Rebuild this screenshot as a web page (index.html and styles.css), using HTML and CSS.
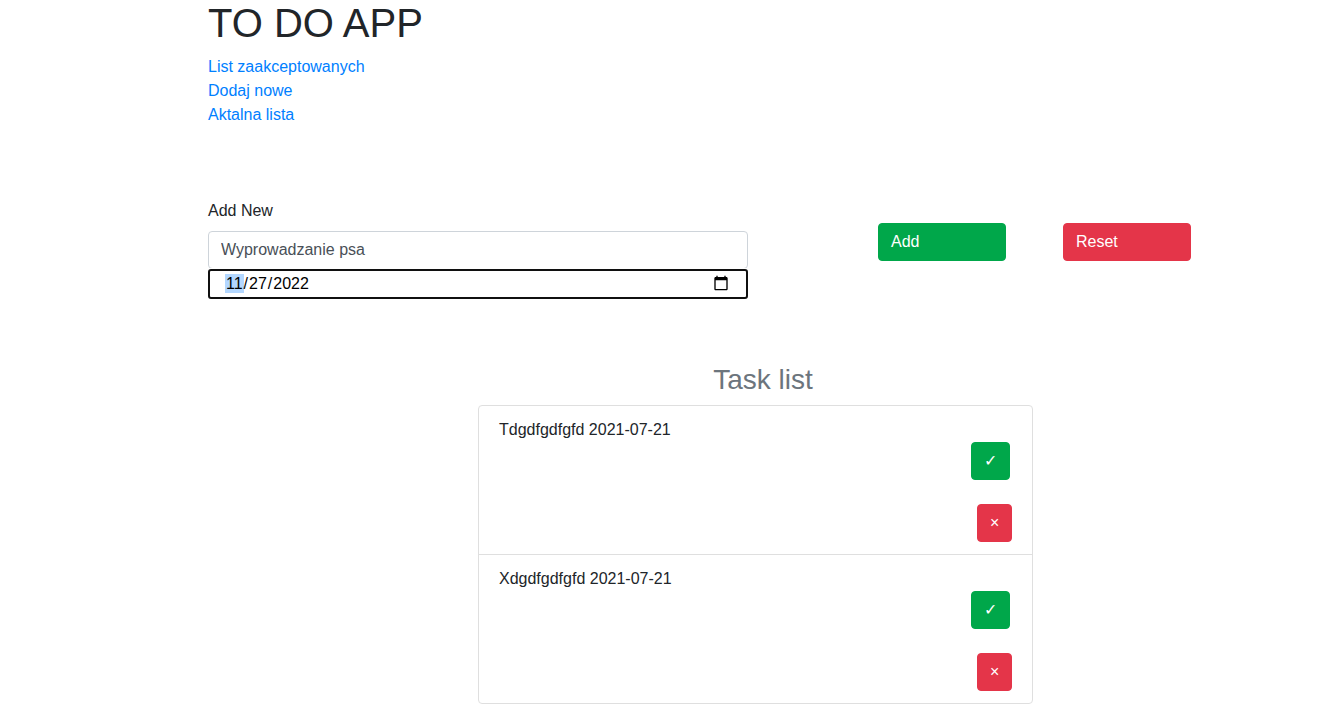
FILE: index.html
```html
<!DOCTYPE html>
<html lang="pl">
<head>
<meta charset="utf-8">
<title>TO DO APP</title>
<link rel="stylesheet" href="styles.css">
</head>
<body>
<div class="page">
  <h1 class="title">TO DO APP</h1>
  <nav class="nav">
    <a href="#">List zaakceptowanych</a>
    <a href="#">Dodaj nowe</a>
    <a href="#">Aktalna lista</a>
  </nav>
  <form class="form">
    <div class="fields">
      <label class="label" for="task">Add New</label>
      <input class="control" id="task" type="text" value="Wyprowadzanie psa">
      <div class="date">
        <span class="date-value"><span class="part selected">11</span>/<span class="part">27</span>/<span class="part">2022</span></span>
        <svg class="calendar" width="16" height="16" viewBox="0 0 24 24"><path d="M20 3h-1V1h-2v2H7V1H5v2H4c-1.100 0-2 .9-2 2v16c0 1.100.9 2 2 2h16c1.100 0 2-.9 2-2V5c0-1.100-.9-2-2-2zm0 18H4V8h16v13z"/></svg>
      </div>
    </div>
    <button class="btn green wide" type="button">Add</button>
    <button class="btn red wide" type="button">Reset</button>
  </form>
  <section class="tasks">
    <h3 class="heading">Task list</h3>
    <ul class="list">
      <li class="item">
        <span>Tdgdfgdfgfd 2021-07-21</span>
        <button class="btn green accept" type="button">✓</button>
        <button class="btn red remove" type="button">×</button>
      </li>
      <li class="item">
        <span>Xdgdfgdfgfd 2021-07-21</span>
        <button class="btn green accept" type="button">✓</button>
        <button class="btn red remove" type="button">×</button>
      </li>
    </ul>
  </section>
</div>
</body>
</html>
```
FILE: styles.css
```css
* { box-sizing: border-box; }
html { overflow: hidden; }
body {
  margin: 0;
  font: 16px/24px "Liberation Sans", Arial, sans-serif;
  color: #212529;
  background: #fff;
}
.page {
  display: flow-root;
  padding-left: 208px;
}
.title {
  margin: -1px 0 8px;
  font-size: 40px;
  font-weight: 400;
  line-height: 48px;
}
.nav {
  display: flex;
  flex-direction: column;
  align-items: flex-start;
}
.nav a {
  color: #0080ff;
  text-decoration: none;
}
.form {
  display: flex;
  align-items: flex-start;
  margin-top: 72px;
}
.fields {
  width: 540px;
  margin-right: 130px;
}
.label {
  display: block;
  margin-bottom: 8px;
}
.control {
  display: block;
  width: 100%;
  height: 38px;
  padding: 6px 12px;
  border: 1px solid #ced4da;
  border-radius: 4px;
  font: inherit;
  color: #495057;
}
.date {
  display: flex;
  justify-content: space-between;
  align-items: flex-start;
  height: 30px;
  padding: 3px 17px 0 15px;
  border: 2px solid #101010;
  border-radius: 3px;
  box-shadow: 0 0 0 1px #fff;
  color: #000;
}
.date-value {
  display: flex;
  line-height: 19px;
}
.part { padding: 0 1px; }
.selected { background: #b3d7ff; }
.calendar {
  display: block;
  margin-top: 1px;
}
.btn {
  height: 38px;
  padding: 6px 12px;
  border: 1px solid transparent;
  border-radius: 4px;
  font: inherit;
  color: #fff;
  text-align: left;
}
.green { background-color: #00a74a; border-color: #00a74a; }
.red { background-color: #e43549; border-color: #e43549; }
.wide {
  width: 128px;
  margin-top: 24px;
}
.wide + .wide { margin-left: 57px; }
.tasks {
  width: 555px;
  margin: 64px 0 0 270px;
}
.heading {
  margin: 0 0 8px;
  padding-left: 15px;
  font-size: 28px;
  font-weight: 400;
  line-height: 34px;
  text-align: center;
  color: #6c757d;
}
.list {
  margin: 0;
  padding: 0;
  list-style: none;
  border: 1px solid #dfdfdf;
  border-radius: 4px;
}
.item {
  display: flex;
  flex-direction: column;
  height: 148px;
  padding: 12px 20px;
}
.item + .item {
  height: 149px;
  border-top: 1px solid #dfdfdf;
}
.accept {
  align-self: flex-end;
  width: 39px;
  margin-right: 2px;
}
.remove {
  align-self: flex-end;
  width: 35px;
  margin-top: 24px;
}
```
